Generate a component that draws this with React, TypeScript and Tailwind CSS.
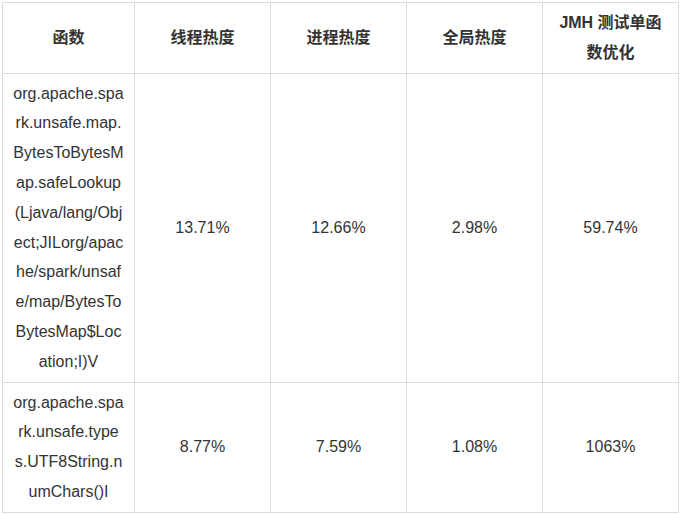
import React from "react";

const headers = ["函数", "线程热度", "进程热度", "全局热度", "JMH 测试单函数优化"];
const rows = [
  [
    "org.apache.spark.unsafe.map.BytesToBytesMap.safeLookup(Ljava/lang/Object;JILorg/apache/spark/unsafe/map/BytesToBytesMap$Location;I)V",
    "13.71%",
    "12.66%",
    "2.98%",
    "59.74%",
  ],
  ["org.apache.spark.unsafe.types.UTF8String.numChars()I", "8.77%", "7.59%", "1.08%", "1063%"],
];

export default function App() {
  return (
    <div className="bg-white w-[680px] h-[514px] pt-[2px] pl-[2px] font-['Liberation_Sans','Noto_Sans_CJK_SC',sans-serif] text-[#333]">
      <table className="table-fixed border-collapse w-[676px] text-[16px] leading-[29.8px]">
        <colgroup>
          <col className="w-[132px]" />
          <col className="w-[136px]" />
          <col className="w-[136px]" />
          <col className="w-[136px]" />
          <col className="w-[136px]" />
        </colgroup>
        <thead>
          <tr>
            {headers.map((h) => (
              <th
                key={h}
                className="border border-[#dcdcdc] px-[10px] py-[5px] text-center align-middle font-bold break-all"
              >
                {h}
              </th>
            ))}
          </tr>
        </thead>
        <tbody>
          {rows.map((r, i) => (
            <tr key={i}>
              {r.map((c, j) => (
                <td
                  key={j}
                  className="border border-[#dcdcdc] px-[10px] py-[5px] text-center align-middle break-all"
                >
                  {c}
                </td>
              ))}
            </tr>
          ))}
        </tbody>
      </table>
    </div>
  );
}
